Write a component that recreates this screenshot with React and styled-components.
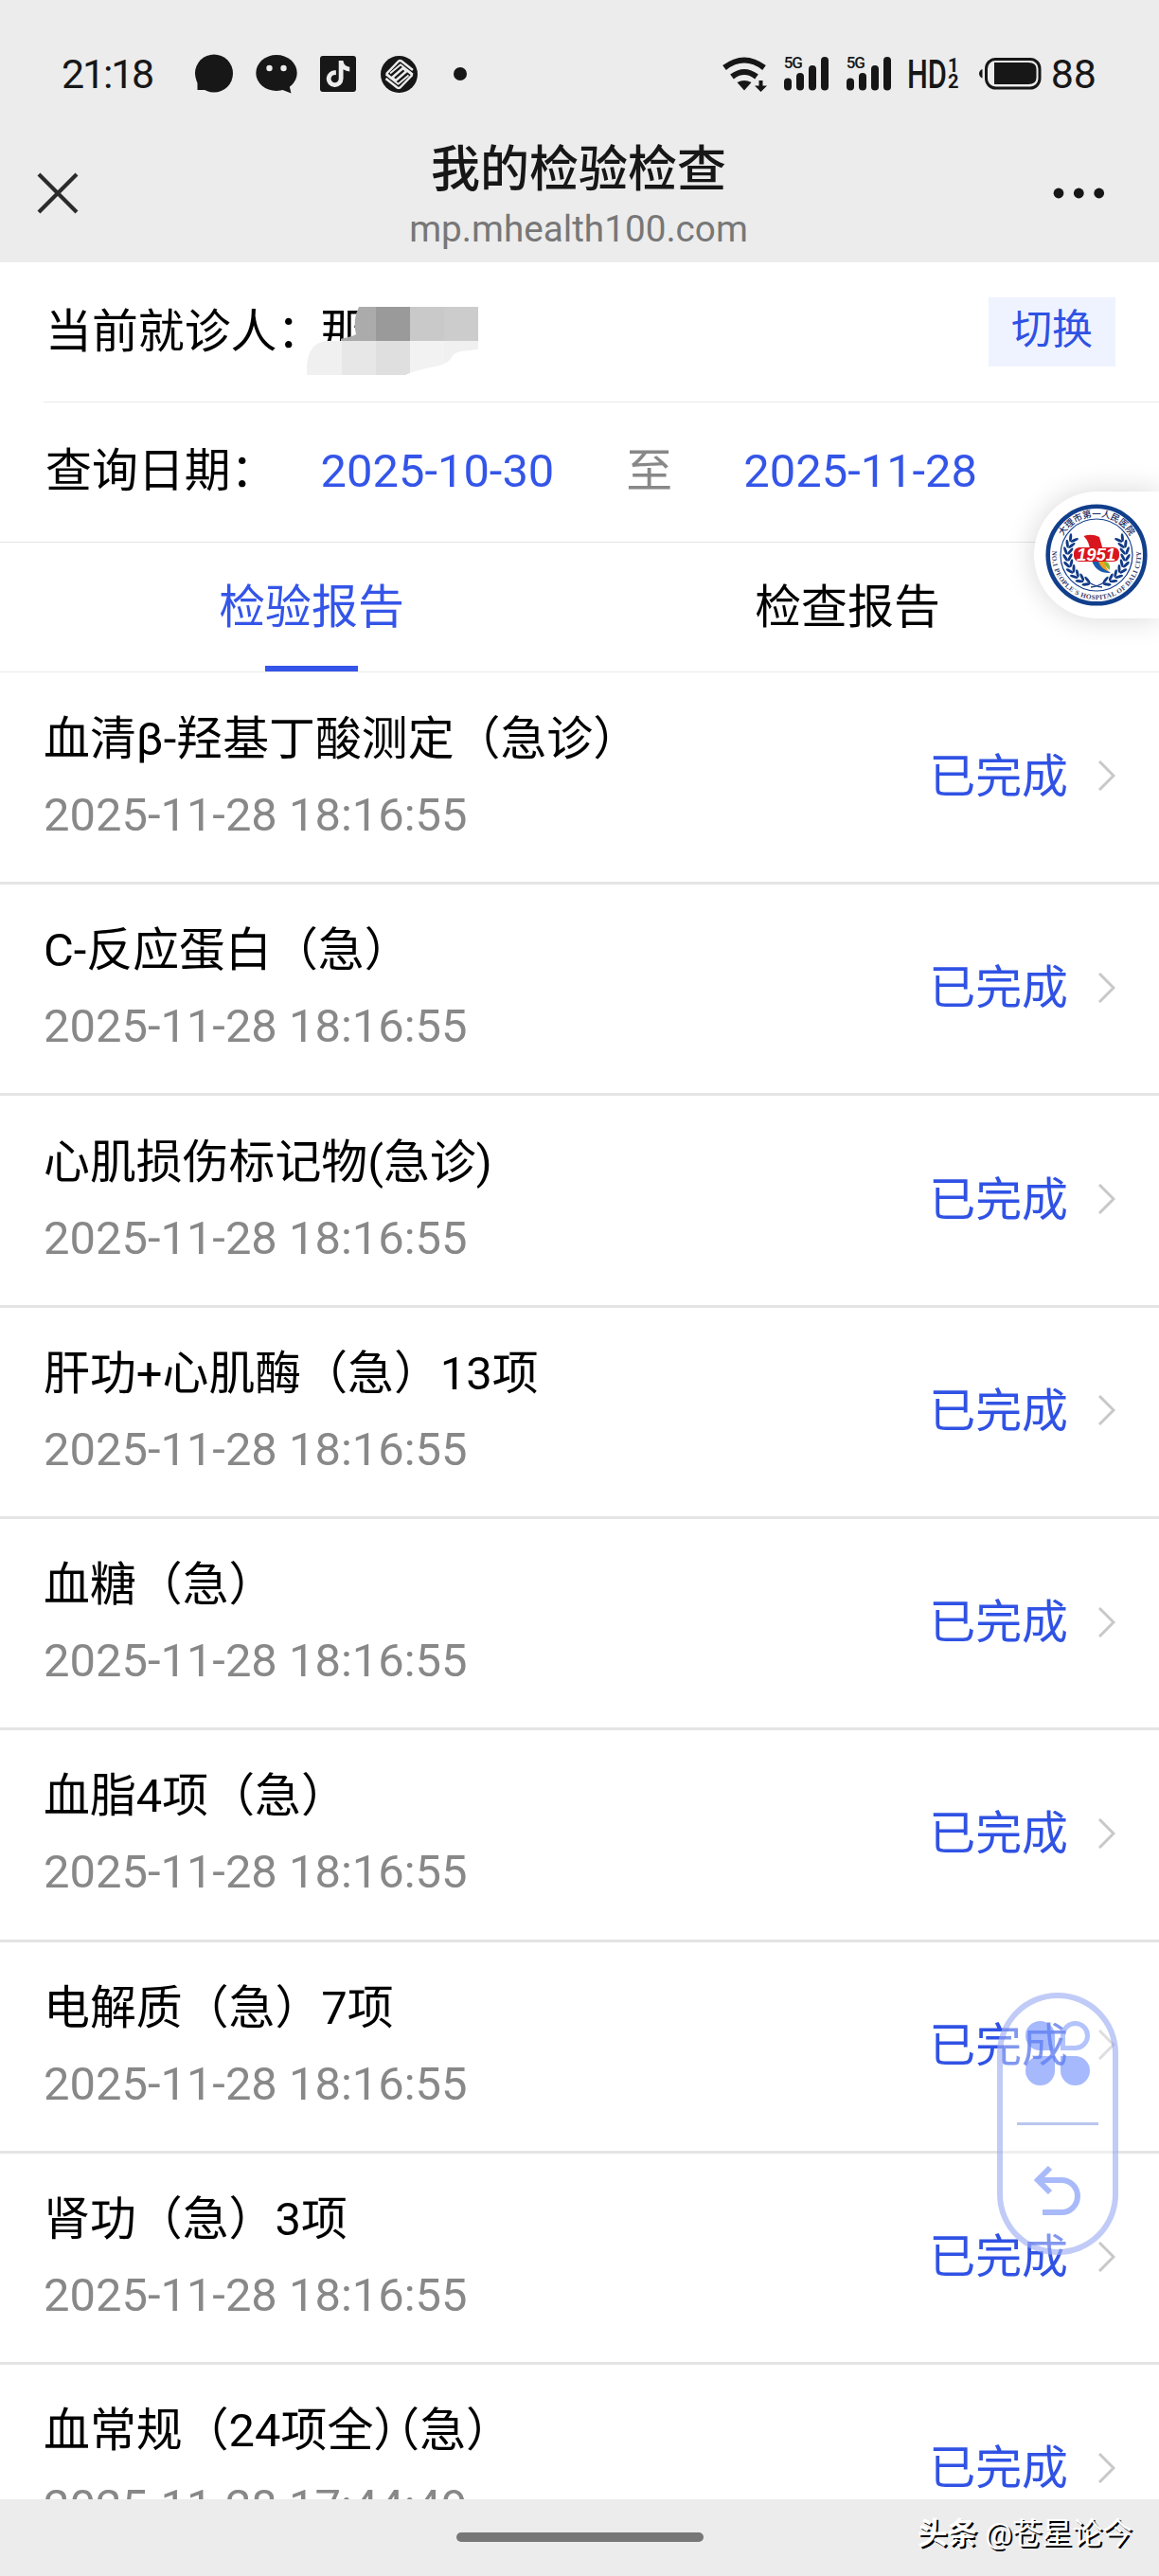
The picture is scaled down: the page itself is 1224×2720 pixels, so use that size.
import React, { useState } from 'react'
import styled, { createGlobalStyle } from 'styled-components'
import { FaTiktok } from 'react-icons/fa6'

const REPORTS = [
  { name: '血清β-羟基丁酸测定（急诊）', date: '2025-11-28 18:16:55' },
  { name: 'C-反应蛋白（急）', date: '2025-11-28 18:16:55' },
  { name: '心肌损伤标记物(急诊)', date: '2025-11-28 18:16:55' },
  { name: '肝功+心肌酶（急）13项', date: '2025-11-28 18:16:55' },
  { name: '血糖（急）', date: '2025-11-28 18:16:55' },
  { name: '血脂4项（急）', date: '2025-11-28 18:16:55' },
  { name: '电解质（急）7项', date: '2025-11-28 18:16:55' },
  { name: '肾功（急）3项', date: '2025-11-28 18:16:55' },
  { name: '血常规（24项全）（急）', date: '2025-11-28 17:44:49' },
]

const TABS = ['检验报告', '检查报告']

export default function App() {
  const [tab, setTab] = useState(0);

  return (
    <Screen>
      <GlobalStyle />
      <Header>
        <StatusBar />
        <NavBar>
          <CloseIcon />
          <NavTitle>
            <Title>我的检验检查</Title>
            <Domain>mp.mhealth100.com</Domain>
          </NavTitle>
          <MoreIcon />
        </NavBar>
      </Header>

      <PatientRow>
        <Label>当前就诊人：</Label>
        <Patient>
          那
          <Mosaic />
        </Patient>
        <SwitchButton>切换</SwitchButton>
      </PatientRow>

      <DateRow>
        <Label>查询日期：</Label>
        <DateLink>2025-10-30</DateLink>
        <DateTo>至</DateTo>
        <DateLink>2025-11-28</DateLink>
      </DateRow>

      <Tabs>
        {TABS.map((label, i) => (
          <Tab key={label} $active={tab === i} onClick={() => setTab(i)}>
            {label}
          </Tab>
        ))}
      </Tabs>

      <List>
        {REPORTS.map((report) => (
          <Row key={report.name}>
            <RowInfo>
              <RowName>{tightBrackets(report.name)}</RowName>
              <RowDate>{report.date}</RowDate>
            </RowInfo>
            <RowStatus>已完成</RowStatus>
            <Chevron />
          </Row>
        ))}
      </List>

      <BottomBar>
        <HomePill />
        <Watermark><b>头条</b> @苍星论今</Watermark>
      </BottomBar>

      <HospitalBadge>
        <HospitalLogo />
      </HospitalBadge>

      <FloatMenu>
        <PetalsIcon />
        <FloatLine />
        <BackIcon />
      </FloatMenu>
    </Screen>
  )
}

// neighbouring full-width brackets take half a cell each
function tightBrackets(name) {
  const parts = name.split('）（')
  if (parts.length < 2) {
    return name
  }
  return (
    <>
      {parts[0]}
      <HalfWidth>）（</HalfWidth>
      {parts[1]}
    </>
  )
}

function StatusBar() {
  return (
    <Status>
      <Clock>21:18</Clock>
      <AppIcons>
        <svg width="42" height="42" viewBox="0 0 42 42" fill="#171717">
          <circle cx="21" cy="20.500" r="20" />
          <path d="M3.500 24 V38 H18 Z" />
        </svg>
        <svg width="44" height="42" viewBox="0 0 44 42" fill="#171717">
          <ellipse cx="22" cy="20" rx="21.700" ry="19" />
          <path d="M26 37 L37.500 41.500 L35 31 Z" />
          <circle cx="14.500" cy="15" r="3.200" fill="#ececec" />
          <circle cx="29.500" cy="15" r="3.200" fill="#ececec" />
        </svg>
        <TiktokBox>
          <FaTiktok size={28} />
        </TiktokBox>
        <svg width="39" height="39" viewBox="0 0 39 39">
          <circle cx="19.500" cy="19.500" r="19.500" fill="#171717" />
          <g fill="none" stroke="#ececec" strokeWidth="2.500" strokeLinejoin="round">
            <path d="M6 19 L19 5.500 Q20.500 4.500 22 5.500 L34 15" />
            <path d="M33.500 20 L20.500 33.500 Q19 34.500 17.500 33.500 L5.500 24" />
            <path d="M6 19 L11.500 23.500 L23.500 13 L28 16.500" />
            <path d="M33.500 20 L28 15.500 L16 26 L11.500 22.500" />
            <path d="M10 18.500 L21 9.200 L34 19.500" strokeWidth="1.800" />
            <path d="M29.500 20.500 L18.500 29.800 L5.500 19.500" strokeWidth="1.800" />
          </g>
        </svg>
        <StatusDot />
      </AppIcons>
      <SystemIcons>
        <svg width="47" height="38" viewBox="0 0 47 38">
          <g fill="none" stroke="#171717" strokeWidth="6">
            <path d="M2 12.500 Q23 -3.500 44 12.500" />
            <path d="M10 22 Q23 12 36 22" />
          </g>
          <path d="M15.500 28 Q23 24 30.500 28 L23 36.500 Z" fill="#171717" />
          <path d="M38.500 26 h4 v5.500 h4.500 l-6.500 6.500 l-6.500 -6.500 h4.500 Z" fill="#171717" />
        </svg>
        <Signal />
        <Signal />
        <HdSvg width="52" height="34" viewBox="0 0 52 34">
          <HdText x="-2" y="32" textLength="42" lengthAdjust="spacingAndGlyphs">HD</HdText>
          <HdIndex x="41" y="14.500">1</HdIndex>
          <HdIndex x="41" y="32">2</HdIndex>
        </HdSvg>
        <svg width="66" height="34" viewBox="0 0 66 34">
          <rect x="7.500" y="1.500" width="56.500" height="30.500" rx="10" fill="none" stroke="#171717" strokeWidth="3" />
          <path d="M16 5 H52 Q60.500 5 60.500 12 V21 Q60.500 28 52 28 H16 Z" fill="#171717" />
          <path d="M3.500 12 V21.500 Q0 20 0 16.750 Q0 13.500 3.500 12 Z" fill="#171717" />
        </svg>
        <Percent>88</Percent>
      </SystemIcons>
    </Status>
  )
}

function Signal() {
  return (
    <SignalBox>
      <SignalText>5G</SignalText>
      <svg width="48" height="36" viewBox="0 0 48 36" fill="#171717">
        <rect x="0" y="22.500" width="8" height="13" rx="4" />
        <rect x="13" y="17" width="8" height="18.500" rx="4" />
        <rect x="26" y="9" width="8" height="26.500" rx="4" />
        <rect x="39" y="0" width="8" height="35.500" rx="4" />
      </svg>
    </SignalBox>
  )
}

function CloseIcon() {
  return (
    <CloseSvg width="44" height="44" viewBox="0 0 44 44" stroke="#2b2b2b" strokeWidth="4.200">
      <path d="M2 2 L42 42 M42 2 L2 42" />
    </CloseSvg>
  )
}

function MoreIcon() {
  return (
    <MoreSvg width="56" height="14" viewBox="0 0 56 14" fill="#171717">
      <circle cx="7" cy="7" r="5.400" />
      <circle cx="28.300" cy="7" r="5.400" />
      <circle cx="49.700" cy="7" r="5.400" />
    </MoreSvg>
  )
}

// pixelated brush stroke that hides the patient's name
function Mosaic() {
  return (
    <MosaicSvg width="181" height="72" viewBox="0 0 181 72">
      <clipPath id="brush">
        <path d="M55 0 H181 V45 L162 47 Q154 49 152 55 Q146 62 130 64 Q112 68 104 72 H0 V62 Q2 37 22 36 Q45 33 52 29 Q48 14 55 0 Z" />
      </clipPath>
      <g clipPath="url(#brush)" shapeRendering="crispEdges">
        <rect x="36" y="0" width="37" height="36" fill="#ababab" />
        <rect x="73" y="0" width="36" height="36" fill="#9a9a9a" />
        <rect x="109" y="0" width="36" height="36" fill="#c9c9c9" />
        <rect x="145" y="0" width="36" height="36" fill="#cccccc" />
        <rect x="0" y="36" width="37" height="36" fill="#f0f0f0" />
        <rect x="37" y="36" width="36" height="36" fill="#e7e7e7" />
        <rect x="73" y="36" width="36" height="36" fill="#dfdfdf" />
        <rect x="109" y="36" width="36" height="36" fill="#f2f2f2" />
        <rect x="145" y="36" width="36" height="36" fill="#f0f0f0" />
      </g>
    </MosaicSvg>
  )
}

function Chevron() {
  return (
    <ChevronSvg width="18" height="32" viewBox="0 0 18 32" fill="none" stroke="#c8c8c8" strokeWidth="3">
      <path d="M1 1 L16 16 L1 31" />
    </ChevronSvg>
  )
}

const LEAVES = [0, 1, 2, 3, 4, 5, 6, 7, 8]

function Laurel() {
  return (
    <g fill="#123a86">
      {LEAVES.map((i) => (
        <g key={i} transform={`rotate(${20 + i * 13} 54 54)`}>
          <ellipse cx="54" cy="82" rx="4.400" ry="1.500" transform="rotate(32 54 82)" />
          <ellipse cx="54" cy="87" rx="4.400" ry="1.500" transform="rotate(-28 54 87)" />
        </g>
      ))}
      <path d="M60 88 Q52 87 46 83" fill="none" stroke="#123a86" strokeWidth="1.500" />
    </g>
  )
}

function HospitalLogo() {
  return (
    <svg width="108" height="108" viewBox="0 0 108 108">
      <circle cx="54" cy="54" r="51.300" fill="#fff" stroke="#123f8c" strokeWidth="4.600" />
      <circle cx="54" cy="54" r="38" fill="none" stroke="#123f8c" strokeWidth="1.200" />
      <path id="ringTop" d="M13.500 54 A40.500 40.500 0 0 1 94.500 54" fill="none" />
      <path id="ringBottom" d="M8.100 44 A47 47 0 1 0 99.900 44" fill="none" />
      <LogoCn>
        <textPath href="#ringTop" startOffset="50%" textAnchor="middle">大理市第一人民医院</textPath>
      </LogoCn>
      <LogoEn>
        <textPath href="#ringBottom" startOffset="50%" textAnchor="middle">NO.1 PEOPLE`S HOSPITAL OF DALI CITY</textPath>
      </LogoEn>
      <Laurel />
      <g transform="translate(108 0) scale(-1 1)">
        <Laurel />
      </g>
      <path d="M40.500 34 Q49 31 57 35 L61 49 H47 Q47 41 40.500 34 Z" fill="#d9151f" />
      <path d="M49 60 H57 Q60 67 69 73 Q54 74 49 60 Z" fill="#1c5bb0" />
      <path d="M56 61 H63 Q63 68 68 72 Q59 69 56 61 Z" fill="#f1a11f" />
      <path d="M62 61 Q69 61 68 70 Q63 67 62 61 Z" fill="#8cb832" />
      <rect x="30" y="46" width="48" height="15" rx="6" fill="#d9151f" />
      <LogoYear x="53.500" y="60" textAnchor="middle">1951</LogoYear>
    </svg>
  )
}

function PetalsIcon() {
  return (
    <svg width="68" height="68" viewBox="0 0 68 68" fill="rgba(94, 131, 250, 0.56)">
      <path d="M15.500 0 A15.500 15.500 0 0 0 15.500 31 H31 V15.500 A15.500 15.500 0 0 0 15.500 0 Z" />
      <path d="M52.500 2.500 A13 13 0 0 1 52.500 28.500 H39.500 V15.500 A13 13 0 0 1 52.500 2.500 Z" fill="none" stroke="rgba(110, 140, 248, 0.52)" strokeWidth="5" />
      <path d="M15.500 68 A15.500 15.500 0 0 1 15.500 37 H31 V52.500 A15.500 15.500 0 0 1 15.500 68 Z" />
      <path d="M52.500 68 A15.500 15.500 0 0 0 52.500 37 H37 V52.500 A15.500 15.500 0 0 0 52.500 68 Z" />
    </svg>
  )
}

function BackIcon() {
  return (
    <svg width="50" height="52" viewBox="0 0 50 52" fill="none" stroke="#a9bafa" strokeWidth="6">
      <path d="M17 2 L4 15 L17 28" />
      <path d="M5 15 H29 A17 17 0 0 1 29 49 H9" />
    </svg>
  )
}

const GlobalStyle = createGlobalStyle`
  * {
    box-sizing: border-box;
  }
  body {
    margin: 0;
    background: #fff;
    font-family: Roboto, 'Noto Sans CJK SC', sans-serif;
  }
  svg {
    flex: none;
    display: block;
  }
`

const Screen = styled.div`
  position: relative;
  display: flex;
  flex-direction: column;
  width: 1224px;
  height: 2720px;
  overflow: hidden;
  background: #fff;
  color: #000;
  font-size: 48.900px;
  line-height: 70px;
`

const Header = styled.header`
  flex: none;
  height: 277px;
  padding-top: 50px;
  background: #ececec;
`

const Status = styled.div`
  display: flex;
  align-items: center;
  height: 56px;
  padding: 0 66px 0 65px;
  color: #171717;
`

const Clock = styled.span`
  width: 140px;
  font-size: 43px;
  line-height: 56px;
  letter-spacing: -2.200px;
`

const AppIcons = styled.div`
  display: flex;
  align-items: center;
  gap: 23px;
`

const TiktokBox = styled.div`
  display: flex;
  align-items: center;
  justify-content: center;
  width: 38px;
  height: 38px;
  margin: 0 3px 0 1px;
  border-radius: 3px;
  background: #171717;
  color: #ececec;
`

const StatusDot = styled.i`
  width: 14px;
  height: 14px;
  margin-left: 15px;
  border-radius: 50%;
  background: #171717;
`

const SystemIcons = styled.div`
  display: flex;
  align-items: center;
  margin-left: auto;
`

const SignalBox = styled.div`
  position: relative;
  margin-left: 18px;
`

const SignalText = styled.span`
  position: absolute;
  left: 0;
  top: -2px;
  font-size: 17px;
  font-weight: 500;
  line-height: 17px;
  letter-spacing: -1px;
`

const HdSvg = styled.svg`
  margin: 0 22px 0 18px;
  overflow: visible;
  fill: #171717;
`

const HdText = styled.text`
  font-size: 43px;
  font-weight: 500;
`

const HdIndex = styled.text`
  font-size: 20px;
  font-weight: 700;
`

const Percent = styled.span`
  margin-left: 10px;
  font-size: 43px;
  line-height: 56px;
`

const NavBar = styled.div`
  display: grid;
  grid-template-columns: 1fr auto 1fr;
  align-items: center;
  padding: 36px 41px 0 39px;
`

const CloseSvg = styled.svg`
  margin-bottom: 2px;
`

const MoreSvg = styled.svg`
  justify-self: end;
  margin: 0 16px 2px 0;
`

const NavTitle = styled.div`
  display: flex;
  flex-direction: column;
  align-items: center;
  padding-top: 2px;
`

const Title = styled.h1`
  margin: 0;
  font-size: 52px;
  font-weight: 500;
  line-height: 72px;
  color: #171717;
`

const Domain = styled.span`
  font-size: 38.700px;
  line-height: 52px;
  color: #777;
`

const PatientRow = styled.div`
  display: flex;
  align-items: center;
  flex: none;
  height: 148px;
  margin-left: 46px;
  padding-right: 46px;
  border-bottom: 1px solid #e9e9e9;
`

const DateRow = styled.div`
  display: flex;
  align-items: center;
  flex: none;
  height: 148px;
  padding-left: 46px;
  padding-bottom: 2px;
  border-bottom: 1px solid #e4e4e4;
`

const Label = styled.span`
  width: 292.500px;
  padding-left: 2px;
  white-space: nowrap;
`

const Patient = styled.span`
  position: relative;
`

const MosaicSvg = styled.svg`
  position: absolute;
  left: -15px;
  top: 8px;
`

const SwitchButton = styled.button`
  width: 134px;
  height: 73px;
  margin-left: auto;
  padding: 0 0 4px;
  border: 0;
  background: #eff3ff;
  color: #2f52e4;
  font-family: inherit;
  font-size: 43px;
  line-height: 69px;
`

const DateLink = styled.span`
  color: #3455e8;
`

const DateTo = styled.span`
  margin: 0 75px 0 76px;
  color: #888;
`

const Tabs = styled.div`
  display: flex;
  flex: none;
  height: 137px;
  padding: 0 46px;
  border-bottom: 1px solid #e9e9e9;
`

const Tab = styled.div`
  position: relative;
  flex: 1;
  text-align: center;
  line-height: 137px;
  color: ${(p) => (p.$active ? '#3455e8' : '#000')};

  &::after {
    content: '';
    display: ${(p) => (p.$active ? 'block' : 'none')};
    position: absolute;
    left: 50%;
    bottom: 0;
    width: 98px;
    height: 6px;
    margin-left: -49px;
    background: #3455e8;
  }
`

const List = styled.div`
  flex: 1;
  min-height: 0;
  overflow: hidden;
  padding-top: 0.800px;
`

const Row = styled.div`
  display: flex;
  align-items: center;
  height: 223.300px;
  padding: 0 46px;
  border-bottom: 3px solid #e4e4e4;
`

const RowInfo = styled.div`
  display: flex;
  flex-direction: column;
  flex: 1;
  gap: 10px;
  white-space: nowrap;
`

const RowName = styled.span`
  line-height: 70px;
`

const HalfWidth = styled.span`
  font-feature-settings: 'halt' 1;
`

const RowDate = styled.span`
  line-height: 70px;
  color: #888;
`

const RowStatus = styled.span`
  margin-right: 32px;
  color: #3052e4;
`

const ChevronSvg = styled.svg`
  margin-bottom: 3px;
`

const BottomBar = styled.div`
  position: relative;
  flex: none;
  height: 81px;
  padding-top: 35px;
  background: #ececec;
`

const HomePill = styled.div`
  width: 261px;
  height: 10px;
  margin: 0 auto;
  border-radius: 5px;
  background: #777;
`

const Watermark = styled.span`
  position: absolute;
  right: 28px;
  top: 13px;
  font-size: 31.800px;
  line-height: 46px;
  white-space: nowrap;
  color: #fff;
  text-shadow: 2px 2px 0 #000;

  b {
    font-weight: 700;
  }
`

const HospitalBadge = styled.div`
  position: absolute;
  right: 0;
  top: 519px;
  display: flex;
  align-items: center;
  width: 132px;
  height: 134px;
  padding-left: 12px;
  border-radius: 67px 0 0 67px;
  background: #fff;
  box-shadow: 0 0 30px rgba(0, 0, 0, 0.16);
`

const LogoCn = styled.text`
  font-family: 'Noto Sans CJK SC', sans-serif;
  font-size: 9.500px;
  font-weight: 500;
  fill: #1b2c62;
`

const LogoEn = styled.text`
  font-family: 'Liberation Serif', serif;
  font-size: 7.200px;
  font-weight: 700;
  letter-spacing: 0.400px;
  fill: #33406b;
`

const LogoYear = styled.text`
  font-family: 'Liberation Sans', sans-serif;
  font-size: 18.500px;
  font-style: italic;
  font-weight: 700;
  fill: #fff;
`

const FloatMenu = styled.div`
  position: absolute;
  left: 1053px;
  top: 2104px;
  display: flex;
  flex-direction: column;
  align-items: center;
  width: 128px;
  height: 277px;
  padding-top: 24px;
  border: 6px solid rgba(160, 175, 242, 0.65);
  border-radius: 64px;
  background: rgba(255, 255, 255, 0.4);
  background-clip: padding-box;
`

const FloatLine = styled.div`
  width: 86px;
  height: 3px;
  margin: 39px 0 43px;
  background: #b9c6ee;
`
